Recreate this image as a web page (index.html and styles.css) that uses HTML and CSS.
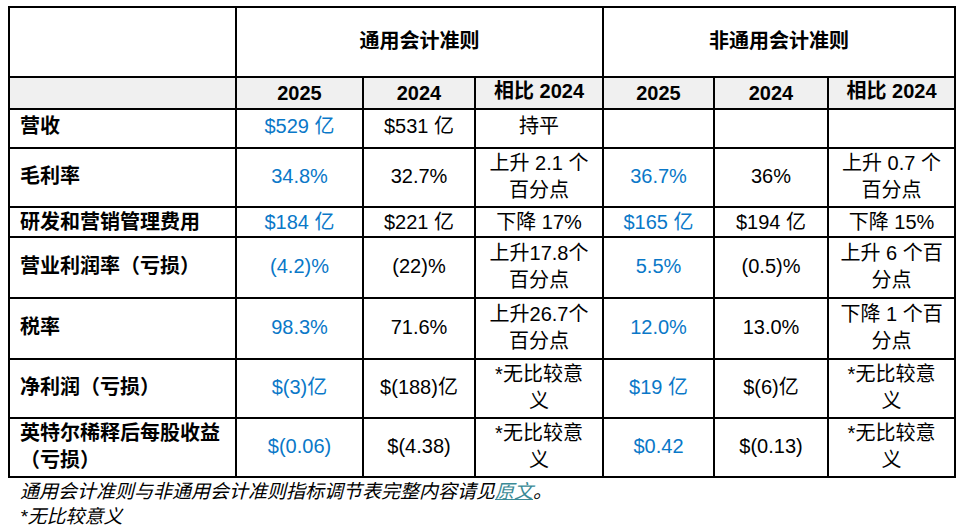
FILE: index.html
```html
<!DOCTYPE html>
<html lang="zh-CN">
<head>
<meta charset="utf-8">
<title>财务摘要</title>
<link rel="stylesheet" href="styles.css">
</head>
<body>
<table class="fin">
  <colgroup>
    <col class="c-label">
    <col class="c-a">
    <col class="c-b">
    <col class="c-c">
    <col class="c-d">
    <col class="c-e">
    <col class="c-f">
  </colgroup>
  <tr class="r-head">
    <td></td>
    <th colspan="3">通用会计准则</th>
    <th colspan="3">非通用会计准则</th>
  </tr>
  <tr class="r-sub">
    <td></td>
    <th>2025</th>
    <th>2024</th>
    <th class="top">相比 2024</th>
    <th>2025</th>
    <th>2024</th>
    <th class="top">相比 2024</th>
  </tr>
  <tr class="r-rev">
    <td class="label">营收</td>
    <td class="blue">$529 亿</td>
    <td>$531 亿</td>
    <td>持平</td>
    <td></td>
    <td></td>
    <td></td>
  </tr>
  <tr class="r-two">
    <td class="label">毛利率</td>
    <td class="blue">34.8%</td>
    <td>32.7%</td>
    <td>上升 2.1 个<br>百分点</td>
    <td class="blue">36.7%</td>
    <td>36%</td>
    <td>上升 0.7 个<br>百分点</td>
  </tr>
  <tr class="r-one">
    <td class="label">研发和营销管理费用</td>
    <td class="blue">$184 亿</td>
    <td>$221 亿</td>
    <td>下降 17%</td>
    <td class="blue">$165 亿</td>
    <td>$194 亿</td>
    <td>下降 15%</td>
  </tr>
  <tr class="r-two61">
    <td class="label">营业利润率（亏损）</td>
    <td class="blue">(4.2)%</td>
    <td>(22)%</td>
    <td>上升17.8个<br>百分点</td>
    <td class="blue">5.5%</td>
    <td>(0.5)%</td>
    <td>上升 6 个百<br>分点</td>
  </tr>
  <tr class="r-two61">
    <td class="label">税率</td>
    <td class="blue">98.3%</td>
    <td>71.6%</td>
    <td>上升26.7个<br>百分点</td>
    <td class="blue">12.0%</td>
    <td>13.0%</td>
    <td>下降 1 个百<br>分点</td>
  </tr>
  <tr class="r-two">
    <td class="label">净利润（亏损）</td>
    <td class="blue">$(3)亿</td>
    <td>$(188)亿</td>
    <td>*无比较意<br>义</td>
    <td class="blue">$19 亿</td>
    <td>$(6)亿</td>
    <td>*无比较意<br>义</td>
  </tr>
  <tr class="r-two">
    <td class="label">英特尔稀释后每股收益<br>（亏损）</td>
    <td class="blue">$(0.06)</td>
    <td>$(4.38)</td>
    <td>*无比较意<br>义</td>
    <td class="blue">$0.42</td>
    <td>$(0.13)</td>
    <td>*无比较意<br>义</td>
  </tr>
</table>
<div class="notes">
  <p>通用会计准则与非通用会计准则指标调节表完整内容请见<a href="#">原文</a>。</p>
  <p>*无比较意义</p>
</div>
</body>
</html>
```

FILE: styles.css
```css
html, body {
  background: #ffffff;
}
body {
  margin: 6px 0 0 8px;
  font-family: "Liberation Sans", "Noto Sans CJK SC", sans-serif;
  font-size: 20px;
  color: #000000;
}
.fin {
  border-collapse: collapse;
  table-layout: fixed;
  width: 946px;
}
.c-label { width: 227px; }
.c-a { width: 127px; }
.c-b { width: 112px; }
.c-c { width: 128px; }
.c-d { width: 111px; }
.c-e { width: 114px; }
.c-f { width: 127px; }

.fin td, .fin th {
  border: 2px solid #000000;
  padding: 0 2px 2px;
  text-align: center;
  vertical-align: middle;
  line-height: 27px;
  white-space: nowrap;
}
.fin th {
  font-weight: bold;
}
.fin td.label {
  text-align: left;
  padding-left: 10px;
  font-weight: bold;
}
.fin .blue {
  color: #0a78c8;
}
.r-head { height: 70px; }
.r-sub { height: 31px; }
.r-sub td, .r-sub th { background: #f0f0f0; padding-top: 1px; padding-bottom: 0; }
.r-sub th.top { padding-top: 0; padding-bottom: 3px; }
.r-rev { height: 39px; }
.r-rev td { padding-bottom: 5px; }
.r-two { height: 59px; }
.r-two61 { height: 61px; }
.r-one { height: 30px; }
.r-one td { padding-bottom: 0; }

.notes {
  padding-left: 12px;
  font-size: 19px;
  font-style: italic;
  line-height: 25px;
  margin-top: 1px;
}
.notes p {
  margin: 0;
}
.notes a {
  color: #3a8a96;
  text-decoration: underline;
}
```
